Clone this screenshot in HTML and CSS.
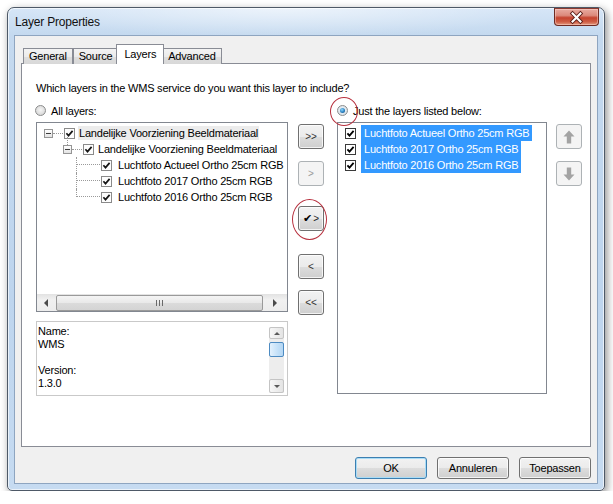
FILE: index.html
```html
<!DOCTYPE html>
<html lang="en">
<head>
<meta charset="utf-8">
<title>Layer Properties</title>
<link rel="stylesheet" href="styles.css">
</head>
<body>
<div class="window">
  <div class="titlebar">
    <span class="title">Layer Properties</span>
    <button class="close" aria-label="Close">
      <svg width="44" height="17" viewBox="0 0 44 17"><path d="M18 4.5 26 12.5M26 4.5 18 12.5" stroke="#5b1d16" stroke-width="4" stroke-linecap="square" fill="none"/><path d="M18 4.5 26 12.5M26 4.5 18 12.5" stroke="#ffffff" stroke-width="2.2" stroke-linecap="square" fill="none"/></svg>
    </button>
  </div>
  <div class="client">
    <div class="tabs">
      <div class="tab">General</div>
      <div class="tab">Source</div>
      <div class="tab tab-active">Layers</div>
      <div class="tab">Advanced</div>
    </div>
    <div class="panel">
      <p class="question">Which layers in the WMS service do you want this layer to include?</p>
      <div class="cols">
        <div class="col-left">
          <div class="radio-row"><span class="radio"></span><span>All layers:</span></div>
          <div class="tree">
            <div class="tree-rows">
              <div class="trow trow-l1">
                <span class="exp"></span><span class="hdots"></span>
                <svg class="cb" viewBox="0 0 11 11"><rect x="0.5" y="0.5" width="10" height="10" fill="#fdfdfd" stroke="#8a8a8a"/><path d="M2.4 5.3 4.5 7.6 8.6 2.9" fill="none" stroke="#151515" stroke-width="1.7"/></svg>
                <span class="tlabel tlabel-sel">Landelijke Voorziening Beeldmateriaal</span>
              </div>
              <div class="trow trow-l2">
                <span class="exp exp-child"></span><span class="hdots"></span>
                <svg class="cb" viewBox="0 0 11 11"><rect x="0.5" y="0.5" width="10" height="10" fill="#fdfdfd" stroke="#8a8a8a"/><path d="M2.4 5.3 4.5 7.6 8.6 2.9" fill="none" stroke="#151515" stroke-width="1.7"/></svg>
                <span class="tlabel">Landelijke Voorziening Beeldmateriaal</span>
              </div>
              <div class="trow trow-leaf">
                <span class="conn"><span class="conn-h"></span></span>
                <svg class="cb" viewBox="0 0 11 11"><rect x="0.5" y="0.5" width="10" height="10" fill="#fdfdfd" stroke="#8a8a8a"/><path d="M2.4 5.3 4.5 7.6 8.6 2.9" fill="none" stroke="#151515" stroke-width="1.7"/></svg>
                <span class="tlabel">Luchtfoto Actueel Ortho 25cm RGB</span>
              </div>
              <div class="trow trow-leaf">
                <span class="conn"><span class="conn-h"></span></span>
                <svg class="cb" viewBox="0 0 11 11"><rect x="0.5" y="0.5" width="10" height="10" fill="#fdfdfd" stroke="#8a8a8a"/><path d="M2.4 5.3 4.5 7.6 8.6 2.9" fill="none" stroke="#151515" stroke-width="1.7"/></svg>
                <span class="tlabel">Luchtfoto 2017 Ortho 25cm RGB</span>
              </div>
              <div class="trow trow-leaf">
                <span class="conn conn-last"><span class="conn-h"></span></span>
                <svg class="cb" viewBox="0 0 11 11"><rect x="0.5" y="0.5" width="10" height="10" fill="#fdfdfd" stroke="#8a8a8a"/><path d="M2.4 5.3 4.5 7.6 8.6 2.9" fill="none" stroke="#151515" stroke-width="1.7"/></svg>
                <span class="tlabel">Luchtfoto 2016 Ortho 25cm RGB</span>
              </div>
            </div>
            <div class="hscroll">
              <span class="hs-btn hs-left"><span class="tri-left"></span></span>
              <span class="hs-thumb"><span class="grip"></span></span>
              <span class="hs-track"></span>
              <span class="hs-btn hs-right"><span class="tri-right"></span></span>
            </div>
          </div>
          <div class="info">
            <div class="info-text">Name:<br>WMS<br><br>Version:<br>1.3.0</div>
            <div class="vscroll">
              <span class="vs-btn vs-up"><span class="tri-up"></span></span>
              <span class="vs-thumb"></span>
              <span class="vs-track"></span>
              <span class="vs-btn vs-down"><span class="tri-down"></span></span>
            </div>
          </div>
        </div>

        <div class="col-mid">
          <button class="btn mbtn">&gt;&gt;</button>
          <button class="btn mbtn mbtn-one" disabled>&gt;</button>
          <button class="btn mbtn mbtn-checked"><span class="check">✔</span>&gt;</button>
          <button class="btn mbtn mbtn-back">&lt;</button>
          <button class="btn mbtn mbtn-all-back">&lt;&lt;</button>
        </div>

        <div class="col-right">
          <div class="radio-row"><span class="radio radio-on"></span><span>Just the layers listed below:</span></div>
          <div class="list">
            <div class="lrow">
              <svg class="cb" viewBox="0 0 11 11"><rect x="0.5" y="0.5" width="10" height="10" fill="#fff" stroke="#3a3a3a"/><path d="M2.4 5.3 4.5 7.6 8.6 2.9" fill="none" stroke="#000" stroke-width="1.8"/></svg>
              <span class="llabel">Luchtfoto Actueel Ortho 25cm RGB</span>
            </div>
            <div class="lrow">
              <svg class="cb" viewBox="0 0 11 11"><rect x="0.5" y="0.5" width="10" height="10" fill="#fff" stroke="#3a3a3a"/><path d="M2.4 5.3 4.5 7.6 8.6 2.9" fill="none" stroke="#000" stroke-width="1.8"/></svg>
              <span class="llabel">Luchtfoto 2017 Ortho 25cm RGB</span>
            </div>
            <div class="lrow">
              <svg class="cb" viewBox="0 0 11 11"><rect x="0.5" y="0.5" width="10" height="10" fill="#fff" stroke="#3a3a3a"/><path d="M2.4 5.3 4.5 7.6 8.6 2.9" fill="none" stroke="#000" stroke-width="1.8"/></svg>
              <span class="llabel">Luchtfoto 2016 Ortho 25cm RGB</span>
            </div>
          </div>
        </div>

        <div class="col-order">
          <button class="btn mbtn" disabled aria-label="Move up"><svg width="12" height="14" viewBox="0 0 12 14"><path d="M6 0.5 11.5 6.5H8.2V13.5H3.8V6.5H0.5Z" fill="#a3a3a3"/></svg></button>
          <button class="btn mbtn mbtn-down" disabled aria-label="Move down"><svg width="12" height="14" viewBox="0 0 12 14"><path d="M6 13.5 11.5 7.5H8.2V0.5H3.8V7.5H0.5Z" fill="#a3a3a3"/></svg></button>
        </div>
      </div>
    </div>
    <div class="footer">
      <button class="btn fbtn fbtn-default">OK</button>
      <button class="btn fbtn">Annuleren</button>
      <button class="btn fbtn">Toepassen</button>
    </div>
  </div>
</div>
</body>
</html>
```

FILE: styles.css
```css
* { box-sizing: border-box; }

html, body {
  margin: 0;
  padding: 0;
  background: #ffffff;
}

body {
  font-family: "Liberation Sans", Arial, sans-serif;
  font-size: 11px;
  letter-spacing: -0.2px;
  color: #000;
}

/* ---------- window frame ---------- */
.window {
  width: 598px;
  height: 484px;
  margin: 7px 0 0 7px;
  padding: 0 6px 6px 6px;
  display: flex;
  flex-direction: column;
  border: 1px solid #4e5967;
  border-radius: 7px 7px 5px 5px;
  background:
    radial-gradient(ellipse 260px 30px at 46% 0, rgba(255,255,255,0.55), rgba(255,255,255,0) 100%),
    linear-gradient(180deg, #d6e6f7 0, #c4d9ef 27px, #bed5ee 60%, #c6dbf1 100%);
  box-shadow: 2px 3px 8px rgba(0,0,0,0.45), inset 0 0 0 1px rgba(255,255,255,0.65);
}

.titlebar {
  height: 27px;
  flex: none;
  display: flex;
  align-items: center;
}

.title {
  margin-left: 1px;
  font-size: 12px;
  color: #111;
  flex: 1;
}

.close {
  align-self: flex-start;
  width: 45px;
  height: 18px;
  margin-right: -1px;
  padding: 0;
  border: 1px solid #6e2a22;
  border-top-color: #8a3a30;
  border-radius: 0 0 4px 4px;
  background: linear-gradient(180deg, #e8aaa0 0, #dc8a7c 40%, #c5432f 55%, #cf5e45 80%, #e39a80 100%);
  box-shadow: inset 0 0 0 1px rgba(255,220,210,0.45);
  display: flex;
  align-items: center;
  justify-content: center;
}
.close svg { display: block; }

.client {
  flex: 1;
  display: flex;
  flex-direction: column;
  padding: 8px 6px 0 6px;
  background: #f0f0f0;
  border: 1px solid #8ea5c0;
}

/* ---------- tabs ---------- */
.tabs {
  display: flex;
  height: 20px;
  margin-bottom: -1px;
  padding-left: 2px;
  position: relative;
  z-index: 2;
}

.tab {
  height: 16px;
  margin-top: 4px;
  padding: 0 5px;
  line-height: 14px;
  border: 1px solid #898c95;
  border-bottom: none;
  background: linear-gradient(180deg, #f3f3f3 0, #ebebeb 50%, #dedede 51%, #d8d8d8 100%);
  color: #000;
}

.tab-active {
  height: 20px;
  margin: 0 -2px;
  padding: 2px 7px 0 7px;
  background: #ffffff;
  position: relative;
  z-index: 3;
}

.panel {
  height: 384px;
  flex: none;
  padding: 18px 0 0 14px;
  background: #ffffff;
  border: 1px solid #898c95;
}

.question {
  margin: 0;
  line-height: 13px;
  height: 13px;
}

.cols {
  display: flex;
  margin-top: 6px;
}

.radio-row {
  height: 19px;
  margin-bottom: 2px;
  display: flex;
  align-items: center;
  gap: 5px;
}

.radio {
  width: 11px;
  height: 11px;
  border-radius: 50%;
  border: 1px solid #8b8c8c;
  background: radial-gradient(circle at 50% 45%, #f6f6f6 0, #dedede 60%, #cacaca 100%);
  display: grid;
  place-items: center;
  flex: none;
}

.col-left .radio { margin-left: -1px; }

.radio-on {
  position: relative;
  background: radial-gradient(circle at 50% 45%, #f2f6f9 0, #d9e3ea 70%, #c3ced6 100%);
}
.radio-on::after {
  content: "";
  width: 5px;
  height: 5px;
  border-radius: 50%;
  background: radial-gradient(circle at 40% 35%, #8fd6fb 0, #2a83c4 55%, #0e3d6b 100%);
}
/* red annotation ring */
.radio-on::before {
  content: "";
  position: absolute;
  left: -8px;
  top: -9px;
  width: 26px;
  height: 27px;
  border: 1px solid #b7303e;
  border-radius: 50%;
}

/* ---------- left column ---------- */
.col-left {
  width: 252px;
  flex: none;
}

.tree {
  height: 190px;
  border: 1px solid #828790;
  background: #fff;
  display: flex;
  flex-direction: column;
  overflow: hidden;
}

.tree-rows {
  flex: 1;
  padding-top: 2px;
  overflow: hidden;
  white-space: nowrap;
}

.trow {
  height: 16px;
  display: flex;
  align-items: center;
}
.trow-l1 { padding-left: 7px; }
.trow-l2 { padding-left: 26px; }
.trow-leaf { padding-left: 39px; }

.exp {
  width: 9px;
  height: 9px;
  flex: none;
  border: 1px solid #959595;
  background: linear-gradient(180deg, #ffffff, #e3e3e3);
  display: grid;
  place-items: center;
  position: relative;
}
.exp::after {
  content: "";
  width: 5px;
  height: 1px;
  background: #3c3c3c;
}
.exp-child::before {
  content: "";
  position: absolute;
  left: 3px;
  top: -9px;
  height: 8px;
  border-left: 1px dotted #9a9a9a;
}

.hdots {
  width: 10px;
  flex: none;
  border-top: 1px dotted #9a9a9a;
}

.conn {
  width: 24px;
  height: 16px;
  flex: none;
  border-left: 1px dotted #9a9a9a;
}
.conn-h {
  display: block;
  height: 8px;
  border-bottom: 1px dotted #9a9a9a;
}
.conn-last { border-left: none; }
.conn-last .conn-h { border-left: 1px dotted #9a9a9a; }

.cb {
  width: 11px;
  height: 11px;
  flex: none;
  margin-left: 1px;
  display: block;
}

.tlabel {
  margin-left: 3px;
  padding: 0 1px;
  line-height: 14px;
}
.trow-leaf .tlabel { margin-left: 5px; }
.tlabel-sel { background: #ececec; }

/* horizontal scrollbar */
.hscroll {
  height: 17px;
  flex: none;
  display: flex;
  align-items: center;
  background: linear-gradient(180deg, #e2e2e2 0, #f1f1f1 35%, #ececec 100%);
}
.hs-btn {
  width: 17px;
  height: 17px;
  display: flex;
  align-items: center;
  justify-content: center;
  flex: none;
}
.hs-left { justify-content: flex-start; padding-left: 7px; }
.hs-right { justify-content: flex-end; padding-right: 10px; width: 22px; }
.tri-left {
  border-top: 4px solid transparent;
  border-bottom: 4px solid transparent;
  border-right: 4px solid #4a4a4a;
}
.tri-right {
  border-top: 4px solid transparent;
  border-bottom: 4px solid transparent;
  border-left: 4px solid #4a4a4a;
}
.hs-thumb {
  width: 207px;
  height: 16px;
  margin-left: 2px;
  flex: none;
  border: 1px solid #9a9a9a;
  border-radius: 2px;
  background: linear-gradient(180deg, #f4f4f4 0, #e9e9e9 50%, #dbdbdb 51%, #d4d4d4 100%);
  display: flex;
  align-items: center;
  justify-content: center;
}
.grip {
  width: 7px;
  height: 6px;
  background: repeating-linear-gradient(90deg, #6a6a6a 0 1px, transparent 1px 3px);
}
.hs-track { flex: 1; }

/* info box */
.info {
  height: 75px;
  margin-top: 9px;
  border: 1px solid #c9c9c9;
  background: #fff;
  display: flex;
}
.info-text {
  flex: 1;
  padding: 3px 0 0 1px;
  line-height: 13px;
}
.vscroll {
  width: 15px;
  margin: 5px 3px 2px 0;
  display: flex;
  flex-direction: column;
  background: #ededed;
}
.vs-btn {
  border: 1px solid #c4c4c4;
  border-radius: 2px;
  background: linear-gradient(90deg, #f7f7f7, #e4e4e4);
  display: flex;
  align-items: center;
  justify-content: center;
}
.vs-up { height: 12px; }
.vs-down { height: 14px; }
.tri-up {
  border-left: 3px solid transparent;
  border-right: 3px solid transparent;
  border-bottom: 3px solid #5a5a5a;
}
.tri-down {
  border-left: 3px solid transparent;
  border-right: 3px solid transparent;
  border-top: 3px solid #5a5a5a;
}
.vs-thumb {
  height: 15px;
  margin-top: 3px;
  border: 1px solid #4d8bc2;
  border-radius: 2px;
  background: linear-gradient(90deg, #e3f1fd, #c3e0f8 60%, #b4d6f3);
}
.vs-track { flex: 1; }

/* ---------- buttons ---------- */
.btn {
  font-family: inherit;
  font-size: 11px;
  letter-spacing: -0.2px;
  color: #000;
  padding: 0;
  border: 1px solid #707070;
  border-radius: 3px;
  background: linear-gradient(180deg, #f2f2f2 0, #ebebeb 50%, #dddddd 51%, #cfcfcf 100%);
  box-shadow: inset 0 0 0 1px rgba(255,255,255,0.75);
}
.btn:disabled {
  color: #9a9a9a;
  border-color: #adb2b5;
  background: #f4f4f4;
  box-shadow: none;
}

.col-mid {
  width: 26px;
  flex: none;
  margin-left: 10px;
  padding-top: 23px;
  display: flex;
  flex-direction: column;
}
.mbtn {
  width: 26px;
  height: 25px;
  font-size: 10px;
  letter-spacing: 0;
  color: #333;
  display: flex;
  align-items: center;
  justify-content: center;
}
.mbtn-one { margin-top: 12px; }
.mbtn-checked { margin-top: 20px; position: relative; color: #222; }
.mbtn-back { margin-top: 23px; }
.mbtn-all-back { margin-top: 11px; }
.check {
  font-family: "DejaVu Sans", sans-serif;
  font-size: 11px;
  font-weight: bold;
  color: #000;
  margin-right: 1px;
}
/* red annotation ring */
.mbtn-checked::after {
  content: "";
  position: absolute;
  left: -7px;
  top: -8px;
  width: 33px;
  height: 39px;
  border: 1px solid #b7303e;
  border-radius: 50%;
}

/* ---------- right column ---------- */
.col-right {
  width: 210px;
  flex: none;
  margin-left: 13px;
}
.list {
  height: 272px;
  border: 1px solid #828790;
  background: #fff;
  padding: 2px 0 0 7px;
  white-space: nowrap;
}
.lrow {
  height: 16px;
  display: flex;
  align-items: center;
}
.lrow .cb { margin-left: 0; }
.llabel {
  margin-left: 5px;
  padding: 0 3px;
  line-height: 16px;
  background: #3399ff;
  color: #fff;
}

.col-order {
  width: 26px;
  flex: none;
  margin-left: 9px;
  padding-top: 23px;
  display: flex;
  flex-direction: column;
}
.mbtn-down { margin-top: 12px; }

/* ---------- footer ---------- */
.footer {
  display: flex;
  justify-content: flex-end;
  gap: 10px;
  margin-top: 10px;
}
.fbtn {
  width: 72px;
  height: 22px;
}
.fbtn-default {
  border-color: #3c7fb1;
  box-shadow: inset 0 0 0 1px #a9dcf6;
}
```
